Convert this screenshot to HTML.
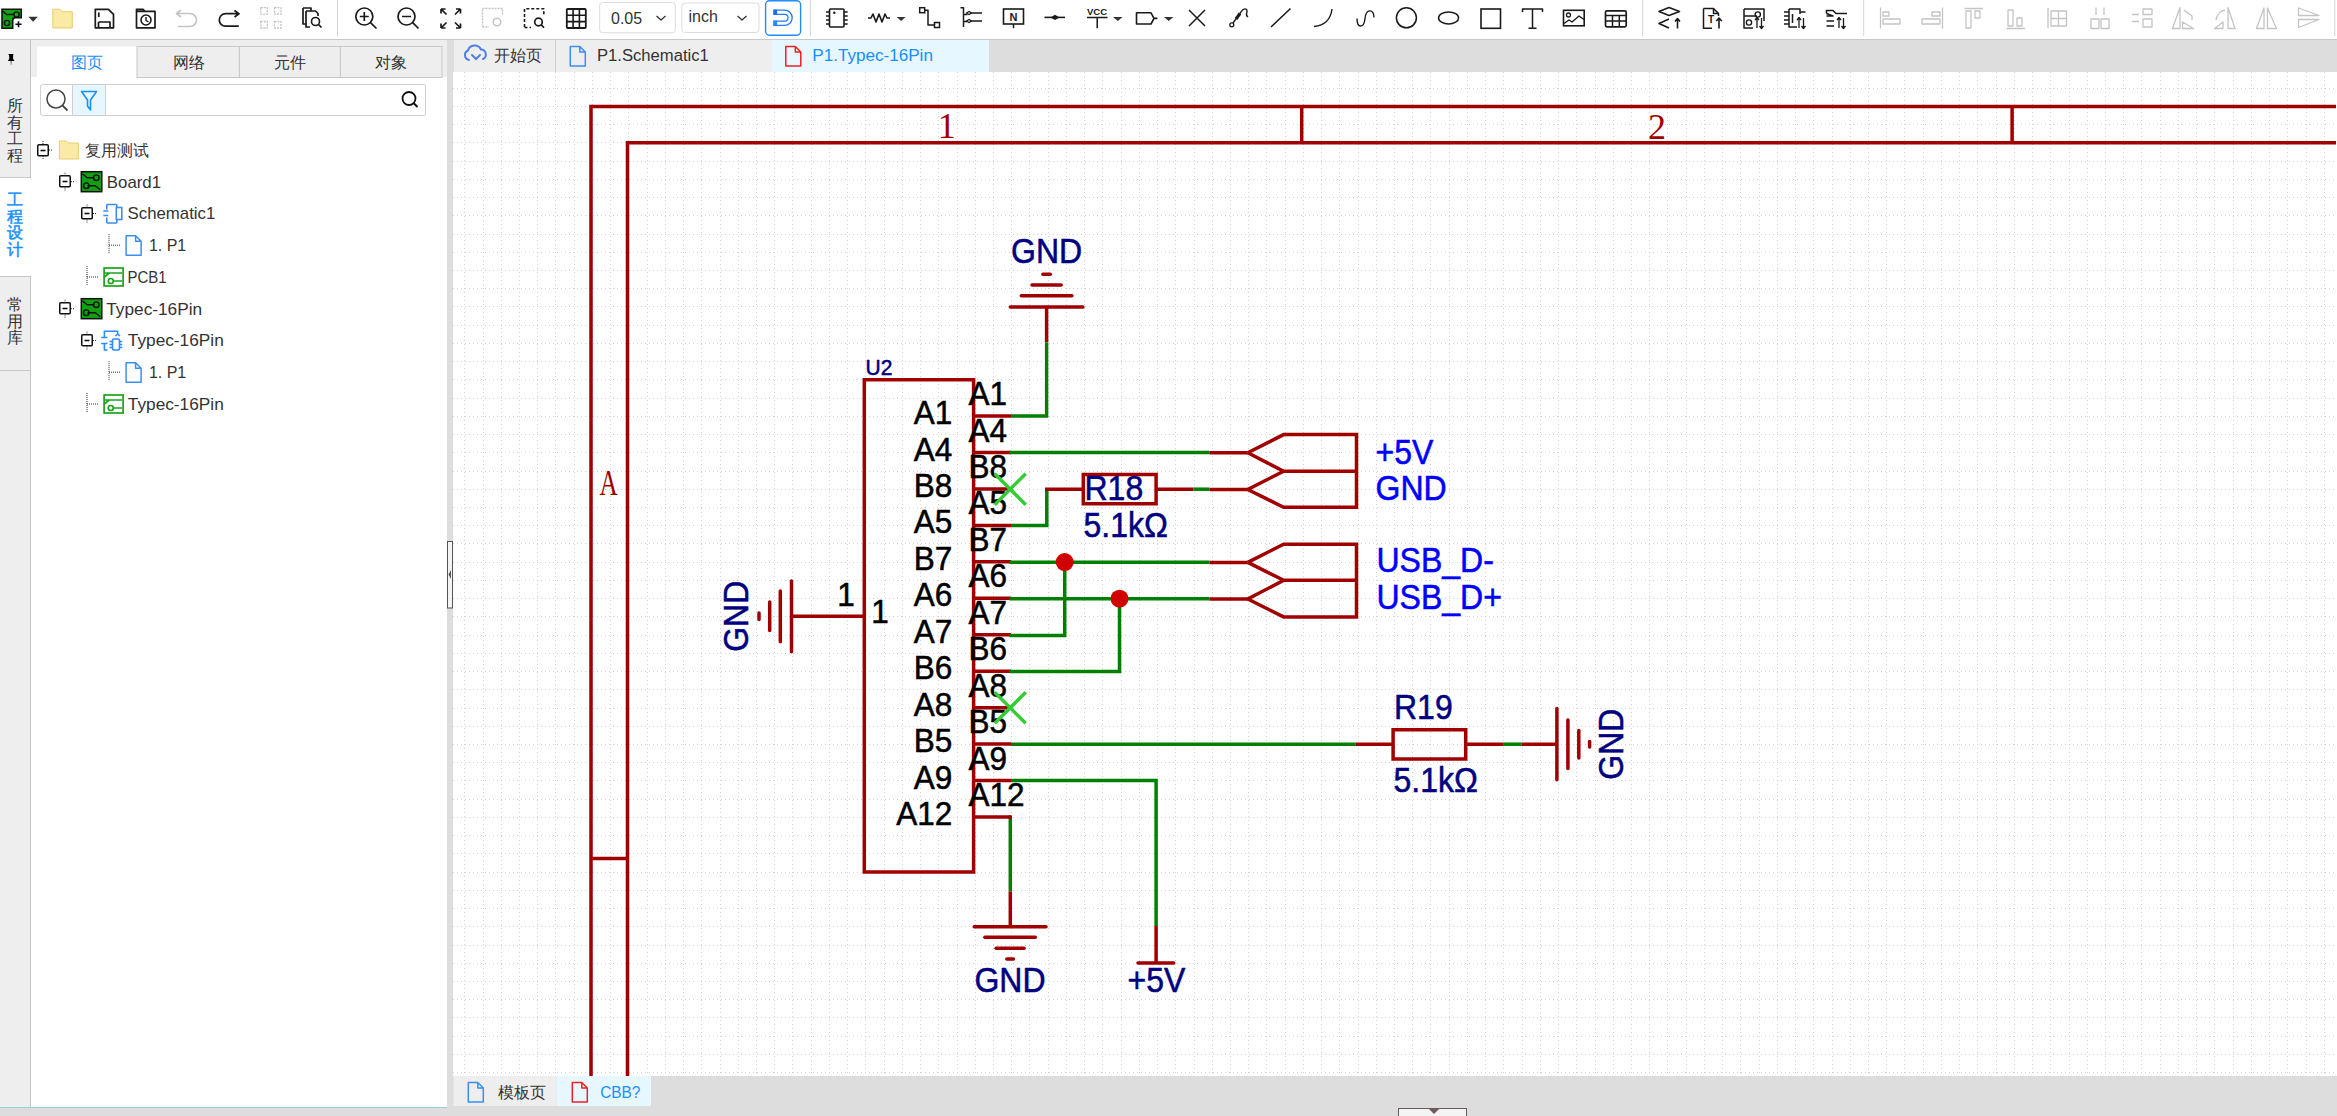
<!DOCTYPE html>
<html><head><meta charset="utf-8"><style>
html,body{margin:0;padding:0;width:2337px;height:1116px;overflow:hidden;background:#fff}
svg{position:absolute;left:0;top:0;display:block}
text{font-family:"Liberation Sans",sans-serif}
.serif{font-family:"Liberation Serif",serif}
</style></head><body>
<svg width="2337" height="1116" viewBox="0 0 2337 1116">
<rect x="0" y="0" width="2337" height="39" fill="#fff"/>
<rect x="0" y="39" width="30" height="1068" fill="#eeeeee"/>
<rect x="30" y="39" width="1" height="1068" fill="#c4c4c4"/>
<rect x="31" y="39" width="416" height="1068" fill="#fff"/>
<rect x="31" y="39" width="416" height="38" fill="#eeeeee"/>
<rect x="447" y="39" width="6" height="1068" fill="#dddddd"/>
<rect x="453" y="39" width="1884" height="33" fill="#dddddd"/>
<rect x="0" y="39" width="2337" height="1" fill="#c8c8c8"/>
<rect x="453" y="72" width="1884" height="1004" fill="#fff"/>
<rect x="453" y="1076" width="1884" height="31" fill="#dddddd"/>
<rect x="0" y="1107" width="2337" height="9" fill="#dddddd"/>
<rect x="0" y="1107" width="447" height="1" fill="#9fcfd6"/>
<path d="M464.5 72V1076 M483.5 72V1076 M501.5 72V1076 M519.5 72V1076 M537.5 72V1076 M555.5 72V1076 M574.5 72V1076 M592.5 72V1076 M610.5 72V1076 M628.5 72V1076 M647.5 72V1076 M665.5 72V1076 M683.5 72V1076 M701.5 72V1076 M720.5 72V1076 M738.5 72V1076 M756.5 72V1076 M774.5 72V1076 M792.5 72V1076 M811.5 72V1076 M829.5 72V1076 M847.5 72V1076 M865.5 72V1076 M884.5 72V1076 M902.5 72V1076 M920.5 72V1076 M938.5 72V1076 M957.5 72V1076 M975.5 72V1076 M993.5 72V1076 M1011.5 72V1076 M1029.5 72V1076 M1048.5 72V1076 M1066.5 72V1076 M1084.5 72V1076 M1102.5 72V1076 M1121.5 72V1076 M1139.5 72V1076 M1157.5 72V1076 M1175.5 72V1076 M1194.5 72V1076 M1212.5 72V1076 M1230.5 72V1076 M1248.5 72V1076 M1266.5 72V1076 M1285.5 72V1076 M1303.5 72V1076 M1321.5 72V1076 M1339.5 72V1076 M1358.5 72V1076 M1376.5 72V1076 M1394.5 72V1076 M1412.5 72V1076 M1430.5 72V1076 M1449.5 72V1076 M1467.5 72V1076 M1485.5 72V1076 M1503.5 72V1076 M1522.5 72V1076 M1540.5 72V1076 M1558.5 72V1076 M1576.5 72V1076 M1595.5 72V1076 M1613.5 72V1076 M1631.5 72V1076 M1649.5 72V1076 M1667.5 72V1076 M1686.5 72V1076 M1704.5 72V1076 M1722.5 72V1076 M1740.5 72V1076 M1759.5 72V1076 M1777.5 72V1076 M1795.5 72V1076 M1813.5 72V1076 M1832.5 72V1076 M1850.5 72V1076 M1868.5 72V1076 M1886.5 72V1076 M1904.5 72V1076 M1923.5 72V1076 M1941.5 72V1076 M1959.5 72V1076 M1977.5 72V1076 M1996.5 72V1076 M2014.5 72V1076 M2032.5 72V1076 M2050.5 72V1076 M2069.5 72V1076 M2087.5 72V1076 M2105.5 72V1076 M2123.5 72V1076 M2141.5 72V1076 M2160.5 72V1076 M2178.5 72V1076 M2196.5 72V1076 M2214.5 72V1076 M2233.5 72V1076 M2251.5 72V1076 M2269.5 72V1076 M2287.5 72V1076 M2306.5 72V1076 M2324.5 72V1076 M453 88.5H2336 M453 106.5H2336 M453 124.5H2336 M453 142.5H2336 M453 161.5H2336 M453 179.5H2336 M453 197.5H2336 M453 215.5H2336 M453 234.5H2336 M453 252.5H2336 M453 270.5H2336 M453 288.5H2336 M453 306.5H2336 M453 325.5H2336 M453 343.5H2336 M453 361.5H2336 M453 379.5H2336 M453 398.5H2336 M453 416.5H2336 M453 434.5H2336 M453 452.5H2336 M453 471.5H2336 M453 489.5H2336 M453 507.5H2336 M453 525.5H2336 M453 543.5H2336 M453 562.5H2336 M453 580.5H2336 M453 598.5H2336 M453 616.5H2336 M453 635.5H2336 M453 653.5H2336 M453 671.5H2336 M453 689.5H2336 M453 708.5H2336 M453 726.5H2336 M453 744.5H2336 M453 762.5H2336 M453 780.5H2336 M453 799.5H2336 M453 817.5H2336 M453 835.5H2336 M453 853.5H2336 M453 872.5H2336 M453 890.5H2336 M453 908.5H2336 M453 926.5H2336 M453 945.5H2336 M453 963.5H2336 M453 981.5H2336 M453 999.5H2336 M453 1017.5H2336 M453 1036.5H2336 M453 1054.5H2336 M453 1072.5H2336" stroke="#d2d2d2" stroke-width="1" stroke-dasharray="1 3" fill="none"/>
<g>
<path d="M591.0 1076.0 L591.0 106.5 L2336.0 106.5" stroke="#a00000" stroke-width="3.5" fill="none" stroke-linecap="butt" stroke-linejoin="miter"/>
<path d="M627.5 1076.0 L627.5 142.7 L2336.0 142.7" stroke="#a00000" stroke-width="3.5" fill="none" stroke-linecap="butt" stroke-linejoin="miter"/>
<path d="M1301.7 106.5 L1301.7 142.7" stroke="#a00000" stroke-width="3.5" fill="none" stroke-linecap="butt" stroke-linejoin="miter"/>
<path d="M2012.1 106.5 L2012.1 142.7" stroke="#a00000" stroke-width="3.5" fill="none" stroke-linecap="butt" stroke-linejoin="miter"/>
<path d="M591.0 858.5 L627.5 858.5" stroke="#a00000" stroke-width="3.5" fill="none" stroke-linecap="butt" stroke-linejoin="miter"/>
<text x="0" y="0" transform="translate(946.7 137.8) scale(1 1)" font-size="36" fill="#a00000" stroke="#a00000" stroke-width="0" text-anchor="middle" class="serif" >1</text>
<text x="0" y="0" transform="translate(1656.9 138.5) scale(1 1)" font-size="36" fill="#a00000" stroke="#a00000" stroke-width="0" text-anchor="middle" class="serif" >2</text>
<text x="0" y="0" transform="translate(608.7 494.8) scale(0.72 1)" font-size="35" fill="#a00000" stroke="#a00000" stroke-width="0" text-anchor="middle" class="serif" >A</text>
<path d="M864.3 379.7 H973.6 V872.1 H864.3 Z" stroke="#a00000" stroke-width="3.5" fill="none"/>
<text x="0" y="0" transform="translate(865.5 374.8) scale(1 1.08)" font-size="21" fill="#000080" stroke="#000080" stroke-width="0.5" text-anchor="start" >U2</text>
<path d="M973.6 416.0 L1011.0 416.0" stroke="#a00000" stroke-width="3.5" fill="none" stroke-linecap="butt" stroke-linejoin="miter"/>
<text x="0" y="0" transform="translate(952.2 424.0) scale(1 1.08)" font-size="31.5" fill="#000" stroke="#000" stroke-width="0.5" text-anchor="end" >A1</text>
<text x="0" y="0" transform="translate(968.5 405.0) scale(1 1.08)" font-size="31.5" fill="#000" stroke="#000" stroke-width="0.5" text-anchor="start" >A1</text>
<path d="M973.6 452.5 L1011.0 452.5" stroke="#a00000" stroke-width="3.5" fill="none" stroke-linecap="butt" stroke-linejoin="miter"/>
<text x="0" y="0" transform="translate(952.2 460.5) scale(1 1.08)" font-size="31.5" fill="#000" stroke="#000" stroke-width="0.5" text-anchor="end" >A4</text>
<text x="0" y="0" transform="translate(968.5 441.5) scale(1 1.08)" font-size="31.5" fill="#000" stroke="#000" stroke-width="0.5" text-anchor="start" >A4</text>
<path d="M973.6 488.9 L1011.0 488.9" stroke="#a00000" stroke-width="3.5" fill="none" stroke-linecap="butt" stroke-linejoin="miter"/>
<text x="0" y="0" transform="translate(952.2 496.9) scale(1 1.08)" font-size="31.5" fill="#000" stroke="#000" stroke-width="0.5" text-anchor="end" >B8</text>
<text x="0" y="0" transform="translate(968.5 477.9) scale(1 1.08)" font-size="31.5" fill="#000" stroke="#000" stroke-width="0.5" text-anchor="start" >B8</text>
<path d="M973.6 525.4 L1011.0 525.4" stroke="#a00000" stroke-width="3.5" fill="none" stroke-linecap="butt" stroke-linejoin="miter"/>
<text x="0" y="0" transform="translate(952.2 533.4) scale(1 1.08)" font-size="31.5" fill="#000" stroke="#000" stroke-width="0.5" text-anchor="end" >A5</text>
<text x="0" y="0" transform="translate(968.5 514.4) scale(1 1.08)" font-size="31.5" fill="#000" stroke="#000" stroke-width="0.5" text-anchor="start" >A5</text>
<path d="M973.6 561.8 L1011.0 561.8" stroke="#a00000" stroke-width="3.5" fill="none" stroke-linecap="butt" stroke-linejoin="miter"/>
<text x="0" y="0" transform="translate(952.2 569.8) scale(1 1.08)" font-size="31.5" fill="#000" stroke="#000" stroke-width="0.5" text-anchor="end" >B7</text>
<text x="0" y="0" transform="translate(968.5 550.8) scale(1 1.08)" font-size="31.5" fill="#000" stroke="#000" stroke-width="0.5" text-anchor="start" >B7</text>
<path d="M973.6 598.3 L1011.0 598.3" stroke="#a00000" stroke-width="3.5" fill="none" stroke-linecap="butt" stroke-linejoin="miter"/>
<text x="0" y="0" transform="translate(952.2 606.3) scale(1 1.08)" font-size="31.5" fill="#000" stroke="#000" stroke-width="0.5" text-anchor="end" >A6</text>
<text x="0" y="0" transform="translate(968.5 587.3) scale(1 1.08)" font-size="31.5" fill="#000" stroke="#000" stroke-width="0.5" text-anchor="start" >A6</text>
<path d="M973.6 634.8 L1011.0 634.8" stroke="#a00000" stroke-width="3.5" fill="none" stroke-linecap="butt" stroke-linejoin="miter"/>
<text x="0" y="0" transform="translate(952.2 642.8) scale(1 1.08)" font-size="31.5" fill="#000" stroke="#000" stroke-width="0.5" text-anchor="end" >A7</text>
<text x="0" y="0" transform="translate(968.5 623.8) scale(1 1.08)" font-size="31.5" fill="#000" stroke="#000" stroke-width="0.5" text-anchor="start" >A7</text>
<path d="M973.6 671.2 L1011.0 671.2" stroke="#a00000" stroke-width="3.5" fill="none" stroke-linecap="butt" stroke-linejoin="miter"/>
<text x="0" y="0" transform="translate(952.2 679.2) scale(1 1.08)" font-size="31.5" fill="#000" stroke="#000" stroke-width="0.5" text-anchor="end" >B6</text>
<text x="0" y="0" transform="translate(968.5 660.2) scale(1 1.08)" font-size="31.5" fill="#000" stroke="#000" stroke-width="0.5" text-anchor="start" >B6</text>
<path d="M973.6 707.7 L1011.0 707.7" stroke="#a00000" stroke-width="3.5" fill="none" stroke-linecap="butt" stroke-linejoin="miter"/>
<text x="0" y="0" transform="translate(952.2 715.7) scale(1 1.08)" font-size="31.5" fill="#000" stroke="#000" stroke-width="0.5" text-anchor="end" >A8</text>
<text x="0" y="0" transform="translate(968.5 696.7) scale(1 1.08)" font-size="31.5" fill="#000" stroke="#000" stroke-width="0.5" text-anchor="start" >A8</text>
<path d="M973.6 744.1 L1011.0 744.1" stroke="#a00000" stroke-width="3.5" fill="none" stroke-linecap="butt" stroke-linejoin="miter"/>
<text x="0" y="0" transform="translate(952.2 752.1) scale(1 1.08)" font-size="31.5" fill="#000" stroke="#000" stroke-width="0.5" text-anchor="end" >B5</text>
<text x="0" y="0" transform="translate(968.5 733.1) scale(1 1.08)" font-size="31.5" fill="#000" stroke="#000" stroke-width="0.5" text-anchor="start" >B5</text>
<path d="M973.6 780.6 L1011.0 780.6" stroke="#a00000" stroke-width="3.5" fill="none" stroke-linecap="butt" stroke-linejoin="miter"/>
<text x="0" y="0" transform="translate(952.2 788.6) scale(1 1.08)" font-size="31.5" fill="#000" stroke="#000" stroke-width="0.5" text-anchor="end" >A9</text>
<text x="0" y="0" transform="translate(968.5 769.6) scale(1 1.08)" font-size="31.5" fill="#000" stroke="#000" stroke-width="0.5" text-anchor="start" >A9</text>
<path d="M973.6 817.1 L1011.0 817.1" stroke="#a00000" stroke-width="3.5" fill="none" stroke-linecap="butt" stroke-linejoin="miter"/>
<text x="0" y="0" transform="translate(952.2 825.1) scale(1 1.08)" font-size="31.5" fill="#000" stroke="#000" stroke-width="0.5" text-anchor="end" >A12</text>
<text x="0" y="0" transform="translate(968.5 806.1) scale(1 1.08)" font-size="31.5" fill="#000" stroke="#000" stroke-width="0.5" text-anchor="start" >A12</text>
<path d="M792.3 616.3 L864.3 616.3" stroke="#a00000" stroke-width="3.5" fill="none" stroke-linecap="butt" stroke-linejoin="miter"/>
<text x="0" y="0" transform="translate(846.0 605.8) scale(1 1.08)" font-size="31.5" fill="#000" stroke="#000" stroke-width="0.5" text-anchor="middle" >1</text>
<text x="0" y="0" transform="translate(880.0 623.4) scale(1 1.08)" font-size="31.5" fill="#000" stroke="#000" stroke-width="0.5" text-anchor="middle" >1</text>
<path d="M791.5 580.9 L791.5 651.7" stroke="#a00000" stroke-width="3.5" fill="none" stroke-linecap="round" stroke-linejoin="miter"/>
<path d="M780.3 590.9 L780.3 641.7" stroke="#a00000" stroke-width="3.5" fill="none" stroke-linecap="round" stroke-linejoin="miter"/>
<path d="M769.7 602.1 L769.7 630.5" stroke="#a00000" stroke-width="3.5" fill="none" stroke-linecap="round" stroke-linejoin="miter"/>
<path d="M759.0 613.0 L759.0 619.6" stroke="#a00000" stroke-width="3.5" fill="none" stroke-linecap="round" stroke-linejoin="miter"/>
<text x="0" y="0" font-size="32" fill="#000080" text-anchor="middle" stroke="#000080" stroke-width="0.5" transform="translate(747.7 616.3) rotate(-90) scale(1 1.08)">GND</text>
<path d="M1010.3 307.0 L1082.9 307.0" stroke="#a00000" stroke-width="3.5" fill="none" stroke-linecap="round" stroke-linejoin="miter"/>
<path d="M1021.3 295.7 L1071.9 295.7" stroke="#a00000" stroke-width="3.5" fill="none" stroke-linecap="round" stroke-linejoin="miter"/>
<path d="M1032.0 285.0 L1061.2 285.0" stroke="#a00000" stroke-width="3.5" fill="none" stroke-linecap="round" stroke-linejoin="miter"/>
<path d="M1042.9 274.2 L1050.3 274.2" stroke="#a00000" stroke-width="3.5" fill="none" stroke-linecap="round" stroke-linejoin="miter"/>
<path d="M1046.6 307.0 L1046.6 342.5" stroke="#a00000" stroke-width="3.5" fill="none" stroke-linecap="butt" stroke-linejoin="miter"/>
<text x="0" y="0" transform="translate(1046.6 262.6) scale(1 1.08)" font-size="32" fill="#000080" stroke="#000080" stroke-width="0.5" text-anchor="middle" >GND</text>
<path d="M1011.0 416.0 L1046.6 416.0 L1046.6 342.5" stroke="#008000" stroke-width="3.4" fill="none" stroke-linecap="butt" stroke-linejoin="miter"/>
<path d="M1009.4 452.6 L1209.4 452.6" stroke="#008000" stroke-width="3.5" fill="none" stroke-linecap="butt" stroke-linejoin="miter"/>
<path d="M1011.0 525.4 L1046.8 525.4 L1046.8 489.2" stroke="#008000" stroke-width="3.5" fill="none" stroke-linecap="butt" stroke-linejoin="miter"/>
<path d="M1045.0 489.2 L1083.3 489.2" stroke="#a00000" stroke-width="3.5" fill="none" stroke-linecap="butt" stroke-linejoin="miter"/>
<path d="M1083.3 474.4 H1156.1 V503.8 H1083.3 Z" stroke="#a00000" stroke-width="3.5" fill="none"/>
<text x="0" y="0" transform="translate(1084.5 500.3) scale(1 1.08)" font-size="32" fill="#000080" stroke="#000080" stroke-width="0.5" text-anchor="start" >R18</text>
<text x="0" y="0" transform="translate(1083.5 536.9) scale(1 1.08)" font-size="32" fill="#000080" stroke="#000080" stroke-width="0.5" text-anchor="start" >5.1kΩ</text>
<path d="M1156.1 489.2 L1193.3 489.2" stroke="#a00000" stroke-width="3.5" fill="none" stroke-linecap="butt" stroke-linejoin="miter"/>
<path d="M1193.3 489.2 L1209.4 489.2" stroke="#008000" stroke-width="3.5" fill="none" stroke-linecap="butt" stroke-linejoin="miter"/>
<path d="M1009.4 562.2 L1209.4 562.2" stroke="#008000" stroke-width="3.5" fill="none" stroke-linecap="butt" stroke-linejoin="miter"/>
<path d="M1064.7 562.1 L1064.7 635.4 L1009.4 635.4" stroke="#008000" stroke-width="3.5" fill="none" stroke-linecap="butt" stroke-linejoin="miter"/>
<path d="M1009.4 598.8 L1209.4 598.8" stroke="#008000" stroke-width="3.5" fill="none" stroke-linecap="butt" stroke-linejoin="miter"/>
<path d="M1119.5 598.7 L1119.5 671.4 L1009.4 671.4" stroke="#008000" stroke-width="3.5" fill="none" stroke-linecap="butt" stroke-linejoin="miter"/>
<circle cx="1064.7" cy="562.1" r="9" fill="#d00000"/>
<circle cx="1119.5" cy="598.7" r="9" fill="#d00000"/>
<path d="M994.7 473.7 L1025.7 504.7" stroke="#33cc33" stroke-width="3.4" fill="none" stroke-linecap="butt" stroke-linejoin="miter"/>
<path d="M994.7 504.7 L1025.7 473.7" stroke="#33cc33" stroke-width="3.4" fill="none" stroke-linecap="butt" stroke-linejoin="miter"/>
<path d="M994.7 692.3 L1025.7 723.3" stroke="#33cc33" stroke-width="3.4" fill="none" stroke-linecap="butt" stroke-linejoin="miter"/>
<path d="M994.7 723.3 L1025.7 692.3" stroke="#33cc33" stroke-width="3.4" fill="none" stroke-linecap="butt" stroke-linejoin="miter"/>
<path d="M1011.0 744.2 L1355.3 744.2" stroke="#008000" stroke-width="3.5" fill="none" stroke-linecap="butt" stroke-linejoin="miter"/>
<path d="M1355.3 744.2 L1393.1 744.2" stroke="#a00000" stroke-width="3.5" fill="none" stroke-linecap="butt" stroke-linejoin="miter"/>
<path d="M1393.1 729.7 H1465.7 V758.9 H1393.1 Z" stroke="#a00000" stroke-width="3.5" fill="none"/>
<path d="M1465.7 744.2 L1503.1 744.2" stroke="#a00000" stroke-width="3.5" fill="none" stroke-linecap="butt" stroke-linejoin="miter"/>
<path d="M1503.1 744.2 L1521.7 744.2" stroke="#008000" stroke-width="3.5" fill="none" stroke-linecap="butt" stroke-linejoin="miter"/>
<path d="M1521.7 744.2 L1556.9 744.2" stroke="#a00000" stroke-width="3.5" fill="none" stroke-linecap="butt" stroke-linejoin="miter"/>
<text x="0" y="0" transform="translate(1394.0 719.1) scale(1 1.08)" font-size="32" fill="#000080" stroke="#000080" stroke-width="0.5" text-anchor="start" >R19</text>
<text x="0" y="0" transform="translate(1393.5 792.1) scale(1 1.08)" font-size="32" fill="#000080" stroke="#000080" stroke-width="0.5" text-anchor="start" >5.1kΩ</text>
<path d="M1556.9 708.6 L1556.9 779.8" stroke="#a00000" stroke-width="3.5" fill="none" stroke-linecap="round" stroke-linejoin="miter"/>
<path d="M1567.9 719.9 L1567.9 768.5" stroke="#a00000" stroke-width="3.5" fill="none" stroke-linecap="round" stroke-linejoin="miter"/>
<path d="M1578.8 730.5 L1578.8 757.9" stroke="#a00000" stroke-width="3.5" fill="none" stroke-linecap="round" stroke-linejoin="miter"/>
<path d="M1589.6 741.4 L1589.6 747.0" stroke="#a00000" stroke-width="3.5" fill="none" stroke-linecap="round" stroke-linejoin="miter"/>
<text x="0" y="0" font-size="32" fill="#000080" text-anchor="middle" stroke="#000080" stroke-width="0.5" transform="translate(1622.5 744.2) rotate(-90) scale(1 1.08)">GND</text>
<path d="M1011.0 780.4 L1156.1 780.4 L1156.1 926.0" stroke="#008000" stroke-width="3.5" fill="none" stroke-linecap="butt" stroke-linejoin="miter"/>
<path d="M1156.1 926.0 L1156.1 963.0" stroke="#a00000" stroke-width="3.5" fill="none" stroke-linecap="butt" stroke-linejoin="miter"/>
<path d="M1138.0 963.0 L1173.7 963.0" stroke="#a00000" stroke-width="3.5" fill="none" stroke-linecap="round" stroke-linejoin="miter"/>
<text x="0" y="0" transform="translate(1156.5 992.2) scale(1 1.08)" font-size="32" fill="#000080" stroke="#000080" stroke-width="0.5" text-anchor="middle" >+5V</text>
<path d="M1010.3 818.5 L1010.3 891.4" stroke="#008000" stroke-width="3.5" fill="none" stroke-linecap="butt" stroke-linejoin="miter"/>
<path d="M1008.5 817.2 L1012.0 817.2" stroke="#a00000" stroke-width="3.5" fill="none" stroke-linecap="butt" stroke-linejoin="miter"/>
<path d="M1010.3 891.4 L1010.3 926.7" stroke="#a00000" stroke-width="3.5" fill="none" stroke-linecap="butt" stroke-linejoin="miter"/>
<path d="M974.2 926.7 L1046.0 926.7" stroke="#a00000" stroke-width="3.5" fill="none" stroke-linecap="round" stroke-linejoin="miter"/>
<path d="M984.9 937.2 L1035.3 937.2" stroke="#a00000" stroke-width="3.5" fill="none" stroke-linecap="round" stroke-linejoin="miter"/>
<path d="M996.1 948.3 L1024.1 948.3" stroke="#a00000" stroke-width="3.5" fill="none" stroke-linecap="round" stroke-linejoin="miter"/>
<path d="M1006.8 958.9 L1013.4 958.9" stroke="#a00000" stroke-width="3.5" fill="none" stroke-linecap="round" stroke-linejoin="miter"/>
<text x="0" y="0" transform="translate(1010.0 992.2) scale(1 1.08)" font-size="32" fill="#000080" stroke="#000080" stroke-width="0.5" text-anchor="middle" >GND</text>
<path d="M1247.8 452.8 L1283.6 434.6 L1356.5 434.6 L1356.5 507.2 L1283.6 507.2 L1247.8 489.5 L1283.6 471.2 L1247.8 452.8 M1283.6 471.2 L1356.5 471.2" stroke="#a00000" stroke-width="3.5" fill="none" stroke-linejoin="miter"/>
<path d="M1209.4 452.8 L1247.8 452.8" stroke="#a00000" stroke-width="3.5" fill="none" stroke-linecap="butt" stroke-linejoin="miter"/>
<path d="M1209.4 489.5 L1247.8 489.5" stroke="#a00000" stroke-width="3.5" fill="none" stroke-linecap="butt" stroke-linejoin="miter"/>
<path d="M1247.8 562.4 L1283.6 544.2 L1356.5 544.2 L1356.5 616.9 L1283.6 616.9 L1247.8 599.0 L1283.6 580.3 L1247.8 562.4 M1283.6 580.3 L1356.5 580.3" stroke="#a00000" stroke-width="3.5" fill="none" stroke-linejoin="miter"/>
<path d="M1209.4 562.4 L1247.8 562.4" stroke="#a00000" stroke-width="3.5" fill="none" stroke-linecap="butt" stroke-linejoin="miter"/>
<path d="M1209.4 599.0 L1247.8 599.0" stroke="#a00000" stroke-width="3.5" fill="none" stroke-linecap="butt" stroke-linejoin="miter"/>
<text x="0" y="0" transform="translate(1375.5 464.2) scale(1 1.08)" font-size="32" fill="#0000ff" stroke="#0000ff" stroke-width="0.5" text-anchor="start" >+5V</text>
<text x="0" y="0" transform="translate(1375.5 500.0) scale(1 1.08)" font-size="32" fill="#0000ff" stroke="#0000ff" stroke-width="0.5" text-anchor="start" >GND</text>
<text x="0" y="0" transform="translate(1376.5 572.4) scale(1 1.08)" font-size="32" fill="#0000ff" stroke="#0000ff" stroke-width="0.5" text-anchor="start" >USB_D-</text>
<text x="0" y="0" transform="translate(1376.5 609.0) scale(1 1.08)" font-size="32" fill="#0000ff" stroke="#0000ff" stroke-width="0.5" text-anchor="start" >USB_D+</text>
</g>
<rect x="0" y="178" width="31" height="98" fill="#fff"/>
<rect x="0" y="177" width="30" height="1" fill="#c8c8c8"/>
<rect x="0" y="276" width="30" height="1" fill="#c8c8c8"/>
<rect x="0" y="370" width="30" height="1" fill="#c8c8c8"/>
<text x="14.8" y="111.2" font-size="16" fill="#333" stroke="#333" stroke-width="0" text-anchor="middle">所</text>
<text x="14.8" y="127.7" font-size="16" fill="#333" stroke="#333" stroke-width="0" text-anchor="middle">有</text>
<text x="14.8" y="144.2" font-size="16" fill="#333" stroke="#333" stroke-width="0" text-anchor="middle">工</text>
<text x="14.8" y="160.7" font-size="16" fill="#333" stroke="#333" stroke-width="0" text-anchor="middle">程</text>
<text x="14.8" y="205.2" font-size="16" fill="#1890ff" stroke="#1890ff" stroke-width="0.5" text-anchor="middle">工</text>
<text x="14.8" y="221.7" font-size="16" fill="#1890ff" stroke="#1890ff" stroke-width="0.5" text-anchor="middle">程</text>
<text x="14.8" y="238.2" font-size="16" fill="#1890ff" stroke="#1890ff" stroke-width="0.5" text-anchor="middle">设</text>
<text x="14.8" y="254.7" font-size="16" fill="#1890ff" stroke="#1890ff" stroke-width="0.5" text-anchor="middle">计</text>
<text x="14.8" y="310.2" font-size="16" fill="#333" stroke="#333" stroke-width="0" text-anchor="middle">常</text>
<text x="14.8" y="326.7" font-size="16" fill="#333" stroke="#333" stroke-width="0" text-anchor="middle">用</text>
<text x="14.8" y="343.2" font-size="16" fill="#333" stroke="#333" stroke-width="0" text-anchor="middle">库</text>
<path d="M8.2 54 H13.6 L13.1 55.6 V59 L14.6 60.9 H7.8 L9.2 59 V55.6 Z" fill="#000"/><path d="M10.4 60.9 H11.9 L11.3 65 H10.8 Z" fill="#777"/>
<rect x="37" y="46.5" width="100" height="31" fill="#fff"/>
<rect x="137" y="46.5" width="102.4" height="31" fill="#eeeeee" stroke="#c8c8c8" stroke-width="1"/>
<rect x="239.4" y="46.5" width="100.99999999999997" height="31" fill="#eeeeee" stroke="#c8c8c8" stroke-width="1"/>
<rect x="340.4" y="46.5" width="101.60000000000002" height="31" fill="#eeeeee" stroke="#c8c8c8" stroke-width="1"/>
<text x="87" y="68" font-size="16" fill="#1890ff" text-anchor="middle">图页</text>
<text x="188.5" y="68" font-size="16" fill="#333" text-anchor="middle">网络</text>
<text x="289.8" y="68" font-size="16" fill="#333" text-anchor="middle">元件</text>
<text x="391" y="68" font-size="16" fill="#333" text-anchor="middle">对象</text>
<rect x="40.5" y="84.5" width="385" height="31" rx="2" fill="#fff" stroke="#cfcfcf" stroke-width="1"/>
<rect x="72.5" y="85" width="33" height="30" fill="#e6f7ff"/>
<line x1="72.5" y1="85" x2="72.5" y2="115" stroke="#cfcfcf"/>
<line x1="105.5" y1="85" x2="105.5" y2="115" stroke="#cfcfcf"/>
<circle cx="56" cy="99" r="9" stroke="#444" stroke-width="1.5" fill="none"/><path d="M62.5 105.5 L67.5 110.5" stroke="#444" stroke-width="1.8"/>
<path d="M81.5 91.5 H96.5 L90.5 100 V110 L87.5 106 V100 Z" stroke="#1890ff" stroke-width="1.6" fill="none" stroke-linejoin="round"/>
<circle cx="409" cy="98.5" r="6.5" stroke="#111" stroke-width="1.8" fill="none"/><path d="M413.5 103 L417.5 107" stroke="#111" stroke-width="2"/>
<rect x="37.75" y="144.75" width="10.5" height="11" rx="1" fill="#fff" stroke="#111" stroke-width="1.5"/>
<path d="M40.5 150.5 H45.5" stroke="#111" stroke-width="1.6"/>
<path d="M43 141 V144 M43 156 V159 M49 150 H53" stroke="#333" stroke-width="1" stroke-dasharray="1 1"/>
<path d="M59.4 141 h7 l2 2 h10 v16 h-19 z" fill="#fbe9a6" stroke="#e8cf6e" stroke-width="1"/>
<text x="0" y="0" transform="translate(85.2 155.8) scale(1 1)" font-size="16" fill="#333">复用测试</text>
<rect x="59.75" y="175.75" width="10.5" height="11" rx="1" fill="#fff" stroke="#111" stroke-width="1.5"/>
<path d="M62.5 181.5 H67.5" stroke="#111" stroke-width="1.6"/>
<path d="M65 172.7 V175.7 M65 187.7 V190.7 M71 181.7 H75" stroke="#333" stroke-width="1" stroke-dasharray="1 1"/>
<rect x="81.3" y="171.7" width="20.5" height="20" fill="#12a012" stroke="#111" stroke-width="1.5"/>
<path d="M82.3 173.7 l5 4 h7 M87.3 185.7 h8 l5 4" stroke="#111" stroke-width="1.4" fill="none"/>
<circle cx="96.3" cy="177.7" r="2.8" stroke="#111" stroke-width="1.4" fill="none"/><circle cx="86.3" cy="185.7" r="2.8" stroke="#111" stroke-width="1.4" fill="none"/>
<text x="0" y="0" transform="translate(106.8 187.5) scale(1.053 1)" font-size="16" fill="#333">Board1</text>
<rect x="81.75" y="207.75" width="10.5" height="11" rx="1" fill="#fff" stroke="#111" stroke-width="1.5"/>
<path d="M84.5 213.5 H89.5" stroke="#111" stroke-width="1.6"/>
<path d="M87 204.5 V207.5 M87 219.5 V222.5 M93 213.5 H97" stroke="#333" stroke-width="1" stroke-dasharray="1 1"/>
<path d="M106.8 204.5 h10 M106.8 223.0 h10 M106.8 204.5 v5 M106.8 217.5 v5.5 M103.3 211.0 h5 M103.3 215.5 h5 M116.8 204.5 v3 M116.8 219.5 v3.5" stroke="#3d8ef0" stroke-width="1.6" fill="none"/>
<rect x="116.3" y="207.5" width="5.5" height="12" stroke="#3d8ef0" stroke-width="1.6" fill="none"/>
<text x="0" y="0" transform="translate(127.6 219.3) scale(1.05 1)" font-size="16" fill="#333">Schematic1</text>
<path d="M109 234.2 V254.2 M109 245.2 H121" stroke="#333" stroke-width="1" stroke-dasharray="1 1"/>
<path d="M126.1 235.7 h9.5 l5.5 5.5 v14 h-15 z M135.6 235.7 v5.5 h5.5" stroke="#3d8ef0" stroke-width="1.5" fill="none" stroke-linejoin="round"/>
<text x="0" y="0" transform="translate(148.9 251.0) scale(1 1)" font-size="16" fill="#333">1. P1</text>
<path d="M87 266 V286 M87 277 H99" stroke="#333" stroke-width="1" stroke-dasharray="1 1"/>
<rect x="104.1" y="268" width="19" height="18" stroke="#1aa41a" stroke-width="1.7" fill="none"/>
<path d="M104.3 273 h18 M104.3 277 l5 -4 M113.3 281 h9" stroke="#1aa41a" stroke-width="1.7" fill="none"/>
<circle cx="110.8" cy="281" r="2.5" stroke="#1aa41a" stroke-width="1.7" fill="none"/>
<text x="0" y="0" transform="translate(127.4 282.8) scale(0.936 1)" font-size="16" fill="#333">PCB1</text>
<rect x="59.75" y="302.75" width="10.5" height="11" rx="1" fill="#fff" stroke="#111" stroke-width="1.5"/>
<path d="M62.5 308.5 H67.5" stroke="#111" stroke-width="1.6"/>
<path d="M65 299.7 V302.7 M65 314.7 V317.7 M71 308.7 H75" stroke="#333" stroke-width="1" stroke-dasharray="1 1"/>
<rect x="81.3" y="298.7" width="20.5" height="20" fill="#12a012" stroke="#111" stroke-width="1.5"/>
<path d="M82.3 300.7 l5 4 h7 M87.3 312.7 h8 l5 4" stroke="#111" stroke-width="1.4" fill="none"/>
<circle cx="96.3" cy="304.7" r="2.8" stroke="#111" stroke-width="1.4" fill="none"/><circle cx="86.3" cy="312.7" r="2.8" stroke="#111" stroke-width="1.4" fill="none"/>
<text x="0" y="0" transform="translate(106.2 314.5) scale(1.08 1)" font-size="16" fill="#333">Typec-16Pin</text>
<rect x="81.75" y="334.75" width="10.5" height="11" rx="1" fill="#fff" stroke="#111" stroke-width="1.5"/>
<path d="M84.5 340.5 H89.5" stroke="#111" stroke-width="1.6"/>
<path d="M87 331.5 V334.5 M87 346.5 V349.5 M93 340.5 H97" stroke="#333" stroke-width="1" stroke-dasharray="1 1"/>
<path d="M104.4 337.5 V331.2 H117.7 V334.5 M115.4 336.0 L117.7 334.0 L120.0 336.0 M101.2 337.5 H107.5 M101.2 343.5 H107.5 M104.4 343.5 V350.0 H107.5" stroke="#2b8cff" stroke-width="1.6" fill="none" stroke-linejoin="round"/>
<rect x="112.5" y="339.0" width="7" height="11" rx="1.5" stroke="#2b8cff" stroke-width="1.6" fill="none"/>
<path d="M109.5 341.5 H112.5 M109.5 344.5 H112.5 M109.5 347.5 H112.5 M119.5 341.5 H122.2 M119.5 344.5 H122.2 M119.5 347.5 H122.2" stroke="#2b8cff" stroke-width="1.3" fill="none"/>
<text x="0" y="0" transform="translate(127.8 346.3) scale(1.08 1)" font-size="16" fill="#333">Typec-16Pin</text>
<path d="M109 361.2 V381.2 M109 372.2 H121" stroke="#333" stroke-width="1" stroke-dasharray="1 1"/>
<path d="M126.1 362.7 h9.5 l5.5 5.5 v14 h-15 z M135.6 362.7 v5.5 h5.5" stroke="#3d8ef0" stroke-width="1.5" fill="none" stroke-linejoin="round"/>
<text x="0" y="0" transform="translate(148.9 378.0) scale(1 1)" font-size="16" fill="#333">1. P1</text>
<path d="M87 393 V413 M87 404 H99" stroke="#333" stroke-width="1" stroke-dasharray="1 1"/>
<rect x="104.1" y="395" width="19" height="18" stroke="#1aa41a" stroke-width="1.7" fill="none"/>
<path d="M104.3 400 h18 M104.3 404 l5 -4 M113.3 408 h9" stroke="#1aa41a" stroke-width="1.7" fill="none"/>
<circle cx="110.8" cy="408" r="2.5" stroke="#1aa41a" stroke-width="1.7" fill="none"/>
<text x="0" y="0" transform="translate(127.8 409.8) scale(1.08 1)" font-size="16" fill="#333">Typec-16Pin</text>
<rect x="447.5" y="541.5" width="5" height="66.5" fill="#f4f4f4" stroke="#555" stroke-width="1"/>
<path d="M451 570 L448.5 574.5 L451 579 Z" fill="#555"/>
<rect x="454" y="40" width="101" height="32" fill="#eeeeee"/>
<rect x="555" y="40" width="217" height="32" fill="#eeeeee"/>
<rect x="555" y="40" width="1" height="32" fill="#d0d0d0"/>
<rect x="772" y="40" width="217" height="32" fill="#e6f7ff"/>
<path d="M469 60 a5 5 0 0 1 -1 -9.5 a7 7 0 0 1 13 -1 a5 5 0 0 1 2 9.5 M472 55 l4 4 l4 -4" stroke="#4f7fe0" stroke-width="2" fill="none" stroke-linecap="round"/>
<text x="494" y="61" font-size="16" fill="#333">开始页</text>
<path d="M570.3 46.5 h9.5 l5.5 5.5 v14 h-15 z M579.8 46.5 v5.5 h5.5" stroke="#3d8ef0" stroke-width="1.5" fill="none" stroke-linejoin="round"/>
<text x="0" y="0" transform="translate(597 61) scale(1.04 1)" font-size="16" fill="#333">P1.Schematic1</text>
<path d="M785.8 46.5 h9.5 l5.5 5.5 v14 h-15 z M795.3 46.5 v5.5 h5.5" stroke="#ee2222" stroke-width="1.5" fill="none" stroke-linejoin="round"/>
<text x="0" y="0" transform="translate(812.3 61) scale(1.068 1)" font-size="16" fill="#1890ff">P1.Typec-16Pin</text>
<rect x="453.5" y="1076" width="103" height="30" fill="#eeeeee"/>
<rect x="556.5" y="1076" width="94.5" height="30" fill="#e6f7ff"/>
<path d="M468.3 1082.5 h9.5 l5.5 5.5 v14 h-15 z M477.8 1082.5 v5.5 h5.5" stroke="#3d8ef0" stroke-width="1.5" fill="none" stroke-linejoin="round"/>
<text x="498" y="1098" font-size="16" fill="#333">模板页</text>
<path d="M572.3 1082.5 h9.5 l5.5 5.5 v14 h-15 z M581.8 1082.5 v5.5 h5.5" stroke="#ee2222" stroke-width="1.5" fill="none" stroke-linejoin="round"/>
<text x="0" y="0" transform="translate(600.2 1098) scale(0.96 1)" font-size="16" fill="#1890ff">CBB?</text>
<rect x="1398.5" y="1108.5" width="68" height="9" fill="#f4f4f4" stroke="#6b5b5b" stroke-width="1"/>
<path d="M1429 1109 L1439 1109 L1434 1114 Z" fill="#6b5b5b"/>
<rect x="337.0" y="0" width="1" height="36" fill="#d4d4d4"/>
<rect x="809.8" y="0" width="1" height="36" fill="#d4d4d4"/>
<rect x="1642.2" y="0" width="1" height="36" fill="#d4d4d4"/>
<rect x="1863.2" y="0" width="1" height="36" fill="#d4d4d4"/>
<rect x="2334.3" y="0" width="1" height="36" fill="#d4d4d4"/>
<path d="M2 9.2 H21.2 V17.6 H15.5 Q12.7 17.6 12.7 20.5 V28.2 H2 Z" fill="#12a412" stroke="#111" stroke-width="1.6"/>
<path d="M2.5 11 l4 3.5 h7" stroke="#111" stroke-width="1.4" fill="none" stroke-linejoin="round" />
<circle cx="16.5" cy="14.5" r="2.6" stroke="#111" stroke-width="1.4" fill="none"/><circle cx="7" cy="23" r="2.6" stroke="#111" stroke-width="1.4" fill="none"/>
<path d="M18.5 21.3 V27.3 M15.4 24.3 H21.6" stroke="#111" stroke-width="1.6" fill="none" stroke-linejoin="round" />
<path d="M28.4 16.7 L37.8 16.7 L33.099999999999994 21.8 Z" fill="#333"/>
<path d="M52.8 9.2 h7 l2.5 2.5 h10 v16.3 h-19.5 z" fill="#fbe9a6" stroke="#e8cf6e" stroke-width="1"/>
<path d="M95.3 9.3 H108.5 L113.5 14.3 V27.8 H95.3 Z M98.5 22 H110 V27.8 M98.5 22 V27.8 M98.8 12.5 V17" stroke="#1a1a1a" stroke-width="1.7" fill="none" stroke-linejoin="round" />
<path d="M136.5 9.3 H143 L145 11.3 H155 V27.8 H136.5 Z M137 11.3 H155" stroke="#1a1a1a" stroke-width="1.7" fill="none" stroke-linejoin="round" />
<circle cx="146" cy="20" r="5" stroke="#1a1a1a" stroke-width="1.6" fill="none"/>
<path d="M146 17 V20.5 L148.5 22" stroke="#1a1a1a" stroke-width="1.4" fill="none" stroke-linejoin="round" />
<path d="M181 10 L176.5 13.5 L181 17 M177 13.5 H190 a6.5 6.5 0 0 1 0 13 H178" stroke="#c4c4c4" stroke-width="1.7" fill="none" stroke-linejoin="round" />
<path d="M234.5 10.5 L239 13.7 L234.5 17 M238.5 13.7 H225.5 a6.2 6.2 0 0 0 0 12.4 H238.8" stroke="#1a1a1a" stroke-width="1.7" fill="none" stroke-linejoin="round" />
<rect x="260.8" y="7.7" width="6.5" height="6.5" stroke="#c4c4c4" stroke-width="1.3" fill="none" stroke-dasharray="2 1"/>
<rect x="274.5" y="7.7" width="6.5" height="6.5" stroke="#c4c4c4" stroke-width="1.3" fill="none" stroke-dasharray="2 1"/>
<rect x="260.8" y="21.5" width="6.5" height="6.5" stroke="#c4c4c4" stroke-width="1.3" fill="none" stroke-dasharray="2 1"/>
<rect x="274.5" y="21.5" width="6.5" height="6.5" stroke="#c4c4c4" stroke-width="1.3" fill="none" stroke-dasharray="2 1"/>
<path d="M303 8 H311 V11 M303 8 V24 H306 M306 11 H315.5 L318 13.5 V16 M306 11 V27 H310" stroke="#1a1a1a" stroke-width="1.7" fill="none" stroke-linejoin="round" />
<circle cx="315.5" cy="21.5" r="4" stroke="#1a1a1a" stroke-width="1.6" fill="none"/>
<path d="M318.5 24.5 L321.5 27.5" stroke="#1a1a1a" stroke-width="1.7" fill="none" stroke-linejoin="round" />
<circle cx="364.3" cy="16.5" r="8.5" stroke="#1a1a1a" stroke-width="1.7" fill="none"/>
<path d="M370.5 22.7 L376.5 28.5 M364.3 12 V21 M359.8 16.5 H368.8" stroke="#1a1a1a" stroke-width="1.7" fill="none" stroke-linejoin="round" />
<circle cx="406.5" cy="16.5" r="8.5" stroke="#1a1a1a" stroke-width="1.7" fill="none"/>
<path d="M412.7 22.7 L418.5 28.5 M402 16.5 H411" stroke="#1a1a1a" stroke-width="1.7" fill="none" stroke-linejoin="round" />
<path d="M441 9 L446.5 14.5 M441 9 V13.5 M441 9 H445.5 M460.5 9 L455 14.5 M460.5 9 V13.5 M460.5 9 H456 M441 28 L446.5 22.5 M441 28 V23.5 M441 28 H445.5 M460.5 28 L455 22.5 M460.5 28 V23.5 M460.5 28 H456" stroke="#1a1a1a" stroke-width="1.7" fill="none" stroke-linejoin="round" />
<path d="M482.5 26.5 V8.5 H502.5 V15 M482.5 27 H489" stroke="#c4c4c4" stroke-width="1.4" fill="none" stroke-linejoin="round" stroke-dasharray="2 1"/>
<circle cx="497" cy="22" r="3.8" stroke="#c4c4c4" stroke-width="1.5" fill="none"/>
<path d="M524.5 27 V8.8 H543.8 V15.5 M524.5 27.5 H531" stroke="#1a1a1a" stroke-width="1.6" fill="none" stroke-linejoin="round" stroke-dasharray="3 2"/>
<circle cx="538.5" cy="22" r="3.8" stroke="#1a1a1a" stroke-width="1.7" fill="none"/>
<path d="M541.3 24.8 L544 27.8" stroke="#1a1a1a" stroke-width="1.7" fill="none" stroke-linejoin="round" />
<rect x="566.8" y="9" width="19" height="19" stroke="#1a1a1a" stroke-width="1.8" fill="none" rx="1"/>
<path d="M573.1 9 V28 M579.4 9 V28 M566.8 15.3 H585.8 M566.8 21.6 H585.8" stroke="#1a1a1a" stroke-width="1.6" fill="none" stroke-linejoin="round" />
<rect x="599.7" y="2.5" width="75.6" height="30.3" rx="3" fill="#fff" stroke="#dcdcdc" stroke-width="1"/>
<text x="611" y="24" font-size="16" fill="#333">0.05</text>
<path d="M656.5 16 L661 20 L665.5 16" stroke="#333" stroke-width="1.3" fill="none" stroke-linejoin="round" />
<rect x="681.8" y="3" width="77.2" height="29.5" rx="3" fill="#fff" stroke="#dcdcdc" stroke-width="1"/>
<text x="688.5" y="22.3" font-size="16" fill="#333">inch</text>
<path d="M737.5 16 L742 20 L746.5 16" stroke="#333" stroke-width="1.3" fill="none" stroke-linejoin="round" />
<rect x="765.6" y="0.8" width="35" height="34.5" rx="4" fill="#fff" stroke="#1e8cff" stroke-width="1.4"/>
<path d="M774 10.2 H784.6 A7.6 7.6 0 0 1 784.6 25.4 H774 V21.2 H784.6 A3.4 3.4 0 0 0 784.6 14.4 H774 Z" stroke="#1e7cff" stroke-width="1.3" fill="none"/>
<rect x="773.5" y="9.6" width="3.6" height="5.3" fill="#1e6cff"/><rect x="773.5" y="20.7" width="3.6" height="5.3" fill="#1e8cff"/>
<rect x="829.5" y="9" width="14.5" height="18" rx="1" stroke="#1a1a1a" stroke-width="1.6" fill="none"/>
<circle cx="834.3" cy="12.8" r="1.2" fill="#1a1a1a"/>
<path d="M826 12 h3.5 M826 16 h3.5 M826 20 h3.5 M826 24 h3.5 M844 12 h3.7 M844 16 h3.7 M844 20 h3.7 M844 24 h3.7" stroke="#1a1a1a" stroke-width="1.4" fill="none" stroke-linejoin="round" />
<path d="M868 18 h3 l2 -4 l3 8 l3 -8 l3 8 l3 -8 l2 4 h3" stroke="#1a1a1a" stroke-width="1.6" fill="none" stroke-linejoin="round" />
<path d="M896.6 17 L905.6 17 L901.1 21 Z" fill="#333"/>
<rect x="919.7" y="7.7" width="5" height="5" stroke="#1a1a1a" stroke-width="1.5" fill="none"/><rect x="934.5" y="22.5" width="5" height="5" stroke="#1a1a1a" stroke-width="1.5" fill="none"/>
<path d="M924.7 10.2 H928 V25 H934.5" stroke="#1a1a1a" stroke-width="1.5" fill="none" stroke-linejoin="round" />
<path d="M960.5 7.7 H963.5 V27 M963.5 14.5 H967.5 M963.5 21.5 H967.5 M970 13 H982 M970 21 H982" stroke="#1a1a1a" stroke-width="1.5" fill="none" stroke-linejoin="round" />
<path d="M966.5 13 l2.5 -1.5 l2.5 1.5 l-2.5 1.5 z M966.5 21 l2.5 -1.5 l2.5 1.5 l-2.5 1.5 z" stroke="#1a1a1a" stroke-width="1.2" fill="none"/>
<rect x="1003.5" y="9" width="20" height="15" stroke="#1a1a1a" stroke-width="1.6" fill="none"/>
<text x="1013.5" y="21" font-size="11" font-weight="bold" fill="#1a1a1a" text-anchor="middle">N</text>
<path d="M1013.5 24 V28.2" stroke="#1a1a1a" stroke-width="1.5" fill="none" stroke-linejoin="round" />
<path d="M1044.5 17.4 H1065" stroke="#1a1a1a" stroke-width="1.6" fill="none" stroke-linejoin="round" />
<path d="M1050.5 17.4 l4.5 -2.6 l4.5 2.6 l-4.5 2.6 z" fill="#1a1a1a"/>
<text x="1097" y="15" font-size="9.5" font-weight="bold" fill="#1a1a1a" text-anchor="middle">VCC</text>
<path d="M1087 17.5 H1107.5 M1097.2 17.5 V28.2" stroke="#1a1a1a" stroke-width="1.5" fill="none" stroke-linejoin="round" />
<path d="M1113 17 L1122.6 17 L1117.8 21 Z" fill="#333"/>
<path d="M1136.5 12.8 H1151 L1154 18.4 L1151 24 H1136.5 Z M1154 18.4 H1157.4" stroke="#1a1a1a" stroke-width="1.6" fill="none" stroke-linejoin="round" />
<path d="M1164 17 L1173.4 17 L1168.7 21 Z" fill="#333"/>
<path d="M1189 10 L1205 26 M1205 10 L1189 26" stroke="#1a1a1a" stroke-width="1.5" fill="none" stroke-linejoin="round" />
<circle cx="1231.8" cy="24.8" r="2" stroke="#1a1a1a" stroke-width="1.3" fill="none"/>
<path d="M1233 23 L1241 12 M1241 12 c2 -4 6 -4 6 -1 c0 3 -2 4 1 6" stroke="#1a1a1a" stroke-width="1.4" fill="none" stroke-linejoin="round" />
<path d="M1236 19 L1240 13.5" stroke="#1a1a1a" stroke-width="3" fill="none" stroke-linejoin="round" />
<path d="M1271 27 L1290.5 8.5" stroke="#1a1a1a" stroke-width="1.6" fill="none" stroke-linejoin="round" />
<path d="M1314 26.5 Q1330 25 1332 9" stroke="#1a1a1a" stroke-width="1.4" fill="none" stroke-linejoin="round" />
<path d="M1357 18.5 c0 10 7 10 8 0 c1 -10 9 -10 9 -1" stroke="#1a1a1a" stroke-width="1.4" fill="none" stroke-linejoin="round" />
<circle cx="1406.4" cy="17.8" r="10" stroke="#1a1a1a" stroke-width="1.5" fill="none"/>
<ellipse cx="1448.6" cy="17.9" rx="10" ry="6" stroke="#1a1a1a" stroke-width="1.5" fill="none"/>
<rect x="1481" y="9" width="19.5" height="19.3" stroke="#1a1a1a" stroke-width="1.6" fill="none"/>
<path d="M1522.5 12 V9 H1542.5 V12 M1532.5 9 V28.2 M1528.5 28.2 H1536.5" stroke="#1a1a1a" stroke-width="1.5" fill="none" stroke-linejoin="round" />
<rect x="1563.5" y="10.3" width="20.7" height="15.5" stroke="#1a1a1a" stroke-width="1.6" fill="none"/>
<circle cx="1568.5" cy="15" r="2" stroke="#1a1a1a" stroke-width="1.3" fill="none"/>
<path d="M1564 23.5 L1569 20 L1572 22 L1579 16 L1584 19.5" stroke="#1a1a1a" stroke-width="1.4" fill="none" stroke-linejoin="round" />
<rect x="1605.5" y="10.8" width="20.7" height="16" rx="1.5" stroke="#1a1a1a" stroke-width="1.7" fill="none"/>
<path d="M1605.5 15.5 H1626.2 M1605.5 21 H1626.2 M1612.5 15.5 V26.8 M1619.3 15.5 V26.8" stroke="#1a1a1a" stroke-width="1.5" fill="none" stroke-linejoin="round" />
<path d="M1659 11.5 L1669 7.5 L1679.5 11.5 L1669 15.5 Z M1669 19 L1659 23.5 L1669 28 M1677.5 28.5 V19 M1675 21.5 L1677.5 18.5 L1680 21.5" stroke="#1a1a1a" stroke-width="1.6" fill="none" stroke-linejoin="round" />
<path d="M1703.5 8.5 H1713.5 L1718.5 13.5 V16 M1713.5 8.5 V13.5 H1718.5 M1703.5 8.5 V28.2 H1712" stroke="#1a1a1a" stroke-width="1.5" fill="none" stroke-linejoin="round" />
<text x="1711" y="23" font-size="10" font-weight="bold" fill="#1a1a1a" text-anchor="middle">T</text>
<path d="M1719 28.5 V18 M1716.3 21 L1719 18 L1721.7 21" stroke="#1a1a1a" stroke-width="1.6" fill="none" stroke-linejoin="round" />
<path d="M1744 9 H1764 V21 M1744 9 V28 H1753 M1744 16 L1750 16 H1757" stroke="#1a1a1a" stroke-width="1.5" fill="none" stroke-linejoin="round" />
<circle cx="1757.8" cy="14.5" r="2.6" stroke="#1a1a1a" stroke-width="1.4" fill="none"/><circle cx="1749" cy="22.5" r="2.6" stroke="#1a1a1a" stroke-width="1.4" fill="none"/>
<path d="M1757 17 V28 M1761.5 18 V28 M1755 20 L1757 17.5 L1759 20 M1759.5 26 L1761.5 28.5 L1763.5 26" stroke="#1a1a1a" stroke-width="1.3" fill="none" stroke-linejoin="round" />
<path d="M1789 9 H1800 V14 M1789 9 V27 H1797 M1784 12 H1789 M1784 16 H1789 M1784 20 H1789 M1784 24 H1789 M1800 12 H1805.5 M1792.5 14 V23" stroke="#1a1a1a" stroke-width="1.5" fill="none" stroke-linejoin="round" />
<path d="M1799 17 V28 M1803.5 18 V28 M1797 20 L1799 17.5 L1801 20 M1801.5 26 L1803.5 28.5 L1805.5 26" stroke="#1a1a1a" stroke-width="1.3" fill="none" stroke-linejoin="round" />
<path d="M1826.5 13.5 V10.5 H1833 L1836 13.5 H1847 M1826.5 13.5 L1833 16 H1826.5 M1826.5 21 H1834 M1826.5 26 H1834" stroke="#1a1a1a" stroke-width="1.6" fill="none" stroke-linejoin="round" />
<path d="M1839 17 V28 M1843.5 18 V28 M1837 20 L1839 17.5 L1841 20 M1841.5 26 L1843.5 28.5 L1845.5 26" stroke="#1a1a1a" stroke-width="1.3" fill="none" stroke-linejoin="round" />
<path d="M1880.5 7.5 V28.5 M1883 12 H1889 V16 H1883 Z M1883 19 H1900 V24 H1883 Z" stroke="#c4c4c4" stroke-width="1.3" fill="none" stroke-linejoin="round" />
<path d="M1942.5 7.5 V28.5 M1932 12 H1940 V16 H1932 Z M1922 19 H1940 V24 H1922 Z" stroke="#c4c4c4" stroke-width="1.3" fill="none" stroke-linejoin="round" />
<path d="M1964.5 8.5 H1983 M1966 11 H1971 V28 H1966 Z M1975 11 H1980 V18 H1975 Z" stroke="#c4c4c4" stroke-width="1.3" fill="none" stroke-linejoin="round" />
<path d="M2006.5 28.5 H2025 M2008 10 H2013 V26 H2008 Z M2017 18 H2022 V26 H2017 Z" stroke="#c4c4c4" stroke-width="1.3" fill="none" stroke-linejoin="round" />
<path d="M2048 8 V28 M2051 11 H2066.5 V26 H2051 Z M2058.5 11 V26 M2051 18.5 H2066.5" stroke="#c4c4c4" stroke-width="1.3" fill="none" stroke-linejoin="round" />
<path d="M2096 7.5 V15 M2104 7.5 V15 M2091 19 H2099 V28.5 H2091 Z M2101 19 H2109 V28.5 H2101 Z" stroke="#c4c4c4" stroke-width="1.3" fill="none" stroke-linejoin="round" />
<path d="M2132 14.5 H2139 M2132 21.5 H2139 M2143 9 H2152 V14.5 H2143 Z M2143 19 H2152 V27 H2143 Z" stroke="#c4c4c4" stroke-width="1.3" fill="none" stroke-linejoin="round" />
<path d="M2172.5 28.5 L2180 7.5 V28.5 Z M2182.5 22 L2193.5 28.5 H2182.5 Z M2184 10 L2192 16 V20" stroke="#c4c4c4" stroke-width="1.3" fill="none" stroke-linejoin="round" />
<path d="M2228 7.5 L2235 28.5 H2228 Z M2214.5 28.5 L2223 22 V28.5 Z M2216 20 C2217 14 2221 10.5 2225 10" stroke="#c4c4c4" stroke-width="1.3" fill="none" stroke-linejoin="round" />
<path d="M2256.5 28.5 L2264 8 V28.5 Z M2267.5 8 L2276.5 28.5 H2267.5 Z" stroke="#c4c4c4" stroke-width="1.3" fill="none" stroke-linejoin="round" />
<path d="M2298.5 8 L2319 15.5 H2298.5 Z M2298.5 19.5 H2319 L2298.5 27.5 Z" stroke="#c4c4c4" stroke-width="1.3" fill="none" stroke-linejoin="round" />
</svg>
</body></html>
